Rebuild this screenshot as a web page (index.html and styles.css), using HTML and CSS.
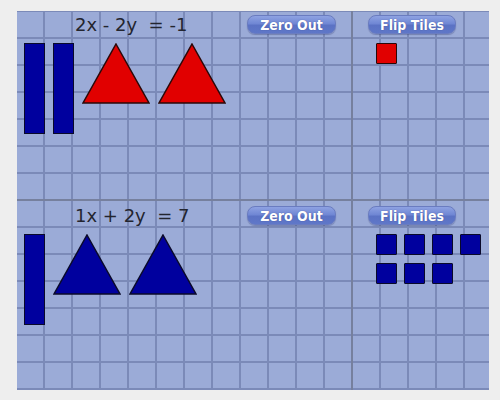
FILE: index.html
```html
<!DOCTYPE html>
<html>
<head>
<meta charset="utf-8">
<link rel="stylesheet" href="styles.css">
</head>
<body>
<div class="board">
  <div class="half half-top">
    <div class="sec sec-left">
      <div class="head">
        <span class="eq">2x - 2y  = -1</span>
        <button class="btn btn-zero">Zero Out</button>
      </div>
      <div class="tiles">
        <div class="bar"></div>
        <div class="bar"></div>
        <svg class="tri" viewBox="0 0 68 61"><polygon points="34,1 67,60 1,60" class="tri-red"/></svg>
        <svg class="tri" viewBox="0 0 68 61"><polygon points="34,1 67,60 1,60" class="tri-red"/></svg>
      </div>
    </div>
    <div class="sec sec-right">
      <div class="head">
        <button class="btn btn-flip">Flip Tiles</button>
      </div>
      <div class="squares">
        <div class="sq sq-red"></div>
      </div>
    </div>
  </div>
  <div class="half half-bottom">
    <div class="sec sec-left">
      <div class="head">
        <span class="eq">1x + 2y  = 7</span>
        <button class="btn btn-zero">Zero Out</button>
      </div>
      <div class="tiles">
        <div class="bar"></div>
        <svg class="tri" viewBox="0 0 68 61"><polygon points="34,1 67,60 1,60" class="tri-blue"/></svg>
        <svg class="tri" viewBox="0 0 68 61"><polygon points="34,1 67,60 1,60" class="tri-blue"/></svg>
      </div>
    </div>
    <div class="sec sec-right">
      <div class="head">
        <button class="btn btn-flip">Flip Tiles</button>
      </div>
      <div class="squares">
        <div class="sq"></div>
        <div class="sq"></div>
        <div class="sq"></div>
        <div class="sq"></div>
        <div class="sq"></div>
        <div class="sq"></div>
        <div class="sq"></div>
      </div>
    </div>
  </div>
</div>
</body>
</html>
```

FILE: styles.css
```css
html, body {
  margin: 0;
  padding: 0;
  background: #eeeeee;
  font-family: "DejaVu Sans", Verdana, sans-serif;
}

body {
  width: 500px;
  height: 400px;
  overflow: hidden;
}

.board {
  margin: 11px 0 0 17px;
  width: 472px;
  height: 379px;
  background-color: #9babd7;
  background-image:
    linear-gradient(to right, #7b8ab8 0, #7b8ab8 2px, transparent 2px),
    linear-gradient(to bottom, #7b8ab8 0, #7b8ab8 2px, transparent 2px);
  background-size: 28px 100%, 100% 27px;
  background-position: 26px 0, 0 26px;
  display: flex;
  flex-direction: column;
}

.half {
  display: flex;
}

.half-top {
  height: 188px;
  border-bottom: 2px solid #76809e;
}

.half-bottom {
  height: 189px;
}

.sec {
  display: flex;
  flex-direction: column;
}

.sec-left {
  width: 334px;
  border-right: 2px solid #76809e;
}

.sec-right {
  width: 136px;
}

.head {
  display: flex;
  align-items: flex-start;
  height: 28px;
}

.half-top .head {
  padding-top: 3px;
}

.half-bottom .head {
  padding-top: 4px;
}

.sec-left .head {
  padding-left: 58px;
}

.sec-right .head {
  padding-left: 15px;
}

.eq {
  width: 172px;
  white-space: pre;
  font-size: 18px;
  line-height: 21px;
  color: #23252f;
}

.btn {
  margin: 1px 0 0 0;
  padding: 0;
  height: 19px;
  border: 1px solid #6a7cc0;
  border-radius: 8px;
  background: linear-gradient(to bottom, #8ea2e2 0%, #7087d4 45%, #5b72c4 55%, #5f77c8 100%);
  color: #ffffff;
  font-family: "DejaVu Sans Condensed", "DejaVu Sans", sans-serif;
  font-weight: bold;
  font-size: 14px;
  line-height: 16px;
  text-shadow: 0 0 1px rgba(30, 40, 100, 0.6);
  box-shadow: 0 1px 1px rgba(60, 70, 120, 0.4);
}

.btn-zero {
  width: 89px;
}

.btn-flip {
  width: 88px;
}

.tiles {
  display: flex;
  align-items: flex-start;
  gap: 8px;
  padding-left: 7px;
  padding-top: 1px;
}

.bar {
  width: 19px;
  height: 89px;
  background: #00009e;
  border: 1px solid #0a0a2a;
}

.tri {
  width: 68px;
  height: 61px;
  display: block;
}

.tri-red {
  fill: #e10000;
  stroke: #2a0808;
  stroke-width: 1.5;
}

.tri-blue {
  fill: #00009e;
  stroke: #0a0a2a;
  stroke-width: 1.5;
}

.squares {
  display: grid;
  grid-template-columns: repeat(4, 21px);
  column-gap: 7px;
  row-gap: 8px;
  padding-left: 23px;
  padding-top: 1px;
}

.sq {
  width: 19px;
  height: 19px;
  background: #00009e;
  border: 1px solid #0a0a2a;
  border-radius: 1px;
}

.sq-red {
  background: #e10000;
  border-color: #2a0808;
}
```
